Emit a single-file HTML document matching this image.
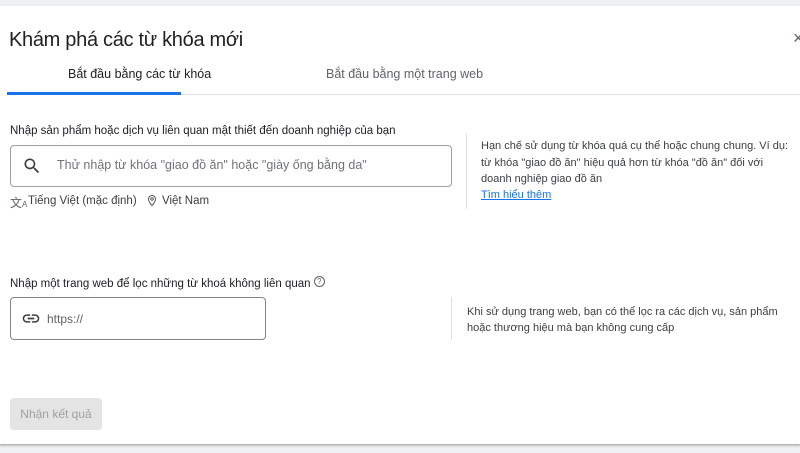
<!DOCTYPE html>
<html><head><meta charset="utf-8"><style>
*{margin:0;padding:0;box-sizing:border-box}
body{width:800px;height:453px;background:#eef0f2;position:relative;overflow:hidden;font-family:"Liberation Sans","Noto Sans CJK SC",sans-serif;color:#202124}
.dlg{position:absolute;left:0;top:6px;width:800px;height:439px;background:#fff;border-bottom:1px solid #b8b8b8;box-shadow:0 1px 2px rgba(0,0,0,.2)}
.a{position:absolute;white-space:nowrap}
</style></head><body>
<div class="dlg"></div>
<div class="a" style="left:9px;top:29px;font-size:20px;color:#202124;letter-spacing:-0.3px">Khám phá các từ khóa mới</div>
<div class="a" style="left:793px;top:28px;font-size:18px;color:#5f6368">×</div>
<div class="a" style="left:68px;top:67px;font-size:12.5px;color:#202124">Bắt đầu bằng các từ khóa</div>
<div class="a" style="left:326px;top:67px;font-size:12.5px;color:#5f6368">Bắt đầu bằng một trang web</div>
<div class="a" style="left:7px;top:94px;width:793px;height:1px;background:#e0e0e0"></div>
<div class="a" style="left:7px;top:92px;width:174px;height:3px;background:#1a73e8"></div>

<div class="a" style="left:10px;top:125px;font-size:11.5px">Nhập sản phẩm hoặc dịch vụ liên quan mật thiết đến doanh nghiệp của bạn</div>
<div class="a" style="left:10px;top:145px;width:442px;height:42px;border:1px solid #9aa0a6;border-radius:4px"></div>
<svg class="a" style="left:22px;top:156px" width="20" height="20" viewBox="0 0 24 24"><path d="M15.5 14h-.8l-.3-.3A6.5 6.5 0 1 0 9.5 16c1.6 0 3.1-.6 4.2-1.6l.3.3v.8l5 5 1.5-1.5-5-5zm-6 0C7 14 5 12 5 9.5S7 5 9.5 5 14 7 14 9.5 12 14 9.5 14z" fill="#3c4043"/></svg>
<div class="a" style="left:57px;top:158px;font-size:12.5px;color:#6f7378">Thử nhập từ khóa "giao đồ ăn" hoặc "giày ống bằng da"</div>
<div class="a" style="left:10px;top:194px;font-size:12px;color:#5f6368">文<span style="font-size:8px">A</span></div>
<div class="a" style="left:28px;top:195px;font-size:11.5px;color:#3c4043">Tiếng Việt (mặc định)</div>
<svg class="a" style="left:146px;top:194px" width="12" height="13" viewBox="0 0 24 24"><path d="M12 2C8.1 2 5 5.1 5 9c0 5.2 7 13 7 13s7-7.8 7-13c0-3.9-3.1-7-7-7zm0 9.5a2.5 2.5 0 1 1 0-5 2.5 2.5 0 0 1 0 5z" fill="none" stroke="#5f6368" stroke-width="2.2"/></svg>
<div class="a" style="left:162px;top:195px;font-size:11.5px;color:#3c4043">Việt Nam</div>

<div class="a" style="left:466px;top:133px;width:1px;height:76px;background:#e0e0e0"></div>
<div class="a" style="left:481px;top:138px;font-size:11px;line-height:16.5px;color:#3c4043;white-space:normal;width:315px">Hạn chế sử dụng từ khóa quá cụ thể hoặc chung chung. Ví dụ: từ khóa "giao đồ ăn" hiệu quả hơn từ khóa "đồ ăn" đối với doanh nghiệp giao đồ ăn</div>
<div class="a" style="left:481px;top:189px;font-size:11px;color:#1a73e8;text-decoration:underline">Tìm hiểu thêm</div>

<div class="a" style="left:10px;top:276px;font-size:11.5px">Nhập một trang web để lọc những từ khoá không liên quan <span style="display:inline-block;width:11px;height:11px;border:1px solid #5f6368;border-radius:50%;font-size:8px;text-align:center;line-height:9px;color:#5f6368;vertical-align:3px">?</span></div>
<div class="a" style="left:10px;top:297px;width:256px;height:43px;border:1px solid #80868b;border-radius:4px"></div>
<svg class="a" style="left:21px;top:312px" width="20" height="13" viewBox="0 0 24 14"><path d="M3.9 7c0-1.7 1.4-3.1 3.1-3.1h4V2H7a5 5 0 0 0 0 10h4v-1.9H7C5.3 10.1 3.9 8.7 3.9 7zM8 8h8V6H8v2zm9-6h-4v1.9h4c1.7 0 3.1 1.4 3.1 3.1s-1.4 3.1-3.1 3.1h-4V12h4a5 5 0 0 0 0-10z" fill="#3c4043"/></svg>
<div class="a" style="left:47px;top:312px;font-size:12px;color:#5f6368">https://</div>
<div class="a" style="left:451px;top:297px;width:1px;height:43px;background:#e0e0e0"></div>
<div class="a" style="left:467px;top:304px;font-size:11px;line-height:16px;color:#3c4043">Khi sử dụng trang web, bạn có thể lọc ra các dịch vụ, sản phẩm<br>hoặc thương hiệu mà bạn không cung cấp</div>

<div class="a" style="left:10px;top:398px;width:92px;height:32px;background:#e4e4e4;border-radius:4px;font-size:12px;color:#a0a0a0;text-align:center;line-height:32px">Nhận kết quả</div>
</body></html>
